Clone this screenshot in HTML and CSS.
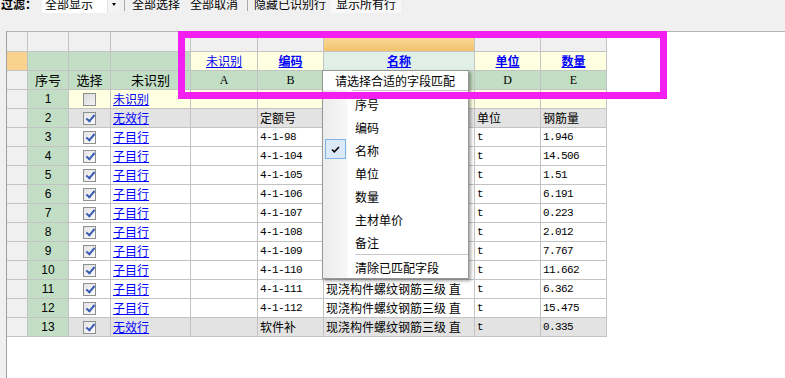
FILE: index.html
```html
<!DOCTYPE html>
<html>
<head>
  <meta charset="utf-8">
  <title>字段匹配</title>
  <link rel="stylesheet" href="styles.css">
</head>
<body>
  <div class="page">
    <div class="toolbar">
      <span class="label">过滤：</span>
      <div class="combo"><span>全部显示</span><span class="drop"><i class="arrow"></i></span></div>
      <span class="sep"></span>
      <a class="btn first">全部选择</a>
      <a class="btn">全部取消</a>
      <span class="sep sep2"></span>
      <a class="btn third">隐藏已识别行</a>
      <a class="btn hover">显示所有行</a>
    </div>

    <div class="sheet">
      <div class="grid">
        <!-- header: selected column -->
        <div class="c grey"></div><div class="c grey"></div><div class="c grey"></div><div class="c grey"></div>
        <div class="c grey"></div><div class="c grey"></div><div class="c sel"></div><div class="c grey"></div><div class="c grey"></div>
        <!-- header: field candidates -->
        <div class="c corner"></div><div class="c green"></div><div class="c green"></div><div class="c green"></div>
        <div class="c cand"><a>未识别</a></div>
        <div class="c cand"><a class="b">编码</a></div>
        <div class="c cand cur"><a class="b">名称</a></div>
        <div class="c cand"><a class="b">单位</a></div>
        <div class="c cand"><a class="b">数量</a></div>
        <!-- header: captions -->
        <div class="c grey"></div>
        <div class="c green ctr cap">序号</div>
        <div class="c green ctr cap">选择</div>
        <div class="c green ctr cap">未识别</div>
        <div class="c green ctr letter">A</div>
        <div class="c green ctr letter">B</div>
        <div class="c green ctr letter">C</div>
        <div class="c green ctr letter">D</div>
        <div class="c green ctr letter">E</div>

        <div class="tr r-new">
          <div class="c grey"></div><div class="c no">1</div>
          <div class="c chk"><span class="box"></span></div>
          <div class="c"><a>未识别</a></div>
          <div class="c"></div><div class="c"></div><div class="c"></div><div class="c"></div><div class="c"></div>
        </div>
        <div class="tr r-void">
          <div class="c grey"></div><div class="c no">2</div>
          <div class="c chk"><span class="box on"></span></div>
          <div class="c"><a>无效行</a></div>
          <div class="c"></div><div class="c">定额号</div><div class="c">名称</div><div class="c">单位</div><div class="c">钢筋量</div>
        </div>
        <div class="tr">
          <div class="c grey"></div><div class="c no">3</div>
          <div class="c chk"><span class="box on"></span></div>
          <div class="c"><a>子目行</a></div>
          <div class="c"></div><div class="c mono">4-1-98</div><div class="c">现浇构件螺纹钢筋三级 直.</div><div class="c mono">t</div><div class="c mono">1.946</div>
        </div>
        <div class="tr">
          <div class="c grey"></div><div class="c no">4</div>
          <div class="c chk"><span class="box on"></span></div>
          <div class="c"><a>子目行</a></div>
          <div class="c"></div><div class="c mono">4-1-104</div><div class="c">现浇构件螺纹钢筋三级 直</div><div class="c mono">t</div><div class="c mono">14.506</div>
        </div>
        <div class="tr">
          <div class="c grey"></div><div class="c no">5</div>
          <div class="c chk"><span class="box on"></span></div>
          <div class="c"><a>子目行</a></div>
          <div class="c"></div><div class="c mono">4-1-105</div><div class="c">现浇构件螺纹钢筋三级 直</div><div class="c mono">t</div><div class="c mono">1.51</div>
        </div>
        <div class="tr">
          <div class="c grey"></div><div class="c no">6</div>
          <div class="c chk"><span class="box on"></span></div>
          <div class="c"><a>子目行</a></div>
          <div class="c"></div><div class="c mono">4-1-106</div><div class="c">现浇构件螺纹钢筋三级 直</div><div class="c mono">t</div><div class="c mono">6.191</div>
        </div>
        <div class="tr">
          <div class="c grey"></div><div class="c no">7</div>
          <div class="c chk"><span class="box on"></span></div>
          <div class="c"><a>子目行</a></div>
          <div class="c"></div><div class="c mono">4-1-107</div><div class="c">现浇构件螺纹钢筋三级 直</div><div class="c mono">t</div><div class="c mono">0.223</div>
        </div>
        <div class="tr">
          <div class="c grey"></div><div class="c no">8</div>
          <div class="c chk"><span class="box on"></span></div>
          <div class="c"><a>子目行</a></div>
          <div class="c"></div><div class="c mono">4-1-108</div><div class="c">现浇构件螺纹钢筋三级 直</div><div class="c mono">t</div><div class="c mono">2.012</div>
        </div>
        <div class="tr">
          <div class="c grey"></div><div class="c no">9</div>
          <div class="c chk"><span class="box on"></span></div>
          <div class="c"><a>子目行</a></div>
          <div class="c"></div><div class="c mono">4-1-109</div><div class="c">现浇构件螺纹钢筋三级 直</div><div class="c mono">t</div><div class="c mono">7.767</div>
        </div>
        <div class="tr">
          <div class="c grey"></div><div class="c no">10</div>
          <div class="c chk"><span class="box on"></span></div>
          <div class="c"><a>子目行</a></div>
          <div class="c"></div><div class="c mono">4-1-110</div><div class="c">现浇构件螺纹钢筋三级 直</div><div class="c mono">t</div><div class="c mono">11.662</div>
        </div>
        <div class="tr">
          <div class="c grey"></div><div class="c no">11</div>
          <div class="c chk"><span class="box on"></span></div>
          <div class="c"><a>子目行</a></div>
          <div class="c"></div><div class="c mono">4-1-111</div><div class="c">现浇构件螺纹钢筋三级 直</div><div class="c mono">t</div><div class="c mono">6.362</div>
        </div>
        <div class="tr">
          <div class="c grey"></div><div class="c no">12</div>
          <div class="c chk"><span class="box on"></span></div>
          <div class="c"><a>子目行</a></div>
          <div class="c"></div><div class="c mono">4-1-112</div><div class="c">现浇构件螺纹钢筋三级 直</div><div class="c mono">t</div><div class="c mono">15.475</div>
        </div>
        <div class="tr r-void">
          <div class="c grey"></div><div class="c no">13</div>
          <div class="c chk"><span class="box on"></span></div>
          <div class="c"><a>无效行</a></div>
          <div class="c"></div><div class="c">软件补</div><div class="c">现浇构件螺纹钢筋三级 直</div><div class="c mono">t</div><div class="c mono">0.335</div>
        </div>
      </div>
    </div>

    <!-- field picker popup -->
    <div class="menu">
      <div class="menu-title">请选择合适的字段匹配</div>
      <div class="menu-body">
        <div class="menu-sep top"></div>
        <div class="item">序号</div>
        <div class="item">编码</div>
        <div class="item checked"><span class="tick"><svg width="9" height="7" viewBox="0 0 9 7"><path d="M1 3.5 L3.3 5.8 L8 1" fill="none" stroke="#000" stroke-width="1.6"/></svg></span>名称</div>
        <div class="item">单位</div>
        <div class="item">数量</div>
        <div class="item">主材单价</div>
        <div class="item">备注</div>
        <div class="menu-sep"></div>
        <div class="item last">清除已匹配字段</div>
      </div>
    </div>

    <div class="mark"></div>
  </div>
</body>
</html>
```

FILE: styles.css
```css
html,
body {
  margin: 0;
  padding: 0;
}

body {
  background: #f0f0f0;
  font-family: "Noto Sans CJK SC", "Liberation Sans", sans-serif;
  font-size: 12px;
  color: #000;
  overflow: hidden;
}

.page {
  position: relative;
  height: 100vh;
  display: flex;
  flex-direction: column;
}

/* toolbar */
.toolbar {
  flex: none;
  display: flex;
  align-items: center;
  height: 18px;
  margin-top: -5px;
  line-height: 18px;
}
.label {
  padding-left: 1px;
  font-weight: bold;
}
.combo {
  display: flex;
  justify-content: space-between;
  width: 77px;
  height: 18px;
  margin-left: 5px;
  padding-left: 3px;
  box-sizing: border-box;
  background: #fff;
}
.drop {
  display: flex;
  align-items: center;
  justify-content: center;
  width: 11px;
  background: #f4f4f4;
  border-left: 1px solid #e2e2e2;
}
.arrow {
  width: 0;
  height: 0;
  margin-top: 1px;
  border-top: 3px solid #000;
  border-left: 2.5px solid transparent;
  border-right: 2.5px solid transparent;
}
.sep {
  align-self: flex-start;
  width: 1px;
  height: 16px;
  margin-left: 5px;
  background: #a8a8a8;
}
.sep2 {
  margin-left: 4px;
}
.btn {
  padding: 0 5px;
  cursor: default;
}
.btn.first {
  margin-left: 2px;
}
.btn.third {
  margin-left: 1px;
}
.btn.hover {
  background: #f8f8f8;
}

/* sheet */
.sheet {
  flex: 1;
  margin: 18px 0 0 6px;
  background: #fff;
  border-top: 1px solid #b4b4b4;
  border-left: 1px solid #a0a0a0;
}
.grid {
  display: grid;
  width: max-content;
  grid-template-columns: 20px 40px 41px 79px 66px 65px 150px 65px 65px;
  grid-template-rows: 19px 18px 18px;
  grid-auto-rows: 18px;
  gap: 1px;
  background: #c3c3c3;
  border-right: 1px solid #c3c3c3;
  border-bottom: 1px solid #c3c3c3;
}
.tr {
  display: contents;
}
.c {
  padding: 0 2px;
  background: #fff;
  line-height: 18px;
  white-space: nowrap;
  overflow: hidden;
}
.r-new .c {
  background: #ffffe1;
}
.r-void .c {
  background: #e3e3e3;
}
.grid .grey {
  background: #f0f0f0;
}
.grid .green,
.grid .no {
  background: #c2dec4;
}
.grid .sel {
  background: linear-gradient(#fae0a9, #f3c36c);
}
.grid .corner {
  background: #f9d38d;
}
.grid .cand {
  background: #ffffe1;
  text-align: center;
}
.grid .cand.cur {
  background: #e1f0e6;
}
.ctr {
  text-align: center;
}
.cap {
  font-size: 13px;
}
.letter {
  font-family: "Liberation Serif", serif;
  font-size: 12px;
}
.no {
  text-align: center;
  font-family: "Liberation Sans", sans-serif;
  font-size: 12px;
}
.mono {
  font-family: "Liberation Mono", monospace;
  font-size: 11px;
  letter-spacing: -0.6px;
}
.c a {
  color: #0000ff;
  text-decoration: underline;
}
.c a.b {
  font-weight: bold;
}

/* checkbox */
.chk {
  display: flex;
  align-items: center;
  justify-content: center;
}
.box {
  position: relative;
  width: 13px;
  height: 13px;
  box-sizing: border-box;
  border: 1px solid #8e8f8f;
  background: linear-gradient(135deg, #d8d8d8, #f6f6f6);
}
.box.on {
  background: linear-gradient(135deg, #e4e4e4, #fbfbfb);
}
.box.on::after {
  content: "";
  position: absolute;
  left: 3.5px;
  top: 0.5px;
  width: 3px;
  height: 7px;
  border-right: 2px solid #3a5cb4;
  border-bottom: 2px solid #3a5cb4;
  transform: rotate(40deg);
}

/* popup */
.menu {
  position: absolute;
  left: 322px;
  top: 70px;
  z-index: 2;
  width: 145px;
  background: #fff;
  border: 1px solid #979797;
  box-shadow: 2px 2px 3px rgba(0, 0, 0, .35);
}
.menu-title {
  height: 19px;
  padding-left: 12px;
  line-height: 19px;
}
.menu-body {
  background: linear-gradient(90deg, #ececec 0, #f7f7f7 24px, #fff 25px);
}
.menu-sep {
  height: 0;
  margin-left: 32px;
  border-top: 1px solid #c8c8c8;
}
.menu-sep.top {
  margin: 0 0 2px 29px;
}
.item {
  position: relative;
  height: 23px;
  padding-left: 32px;
  line-height: 23px;
}
.item.last {
  height: 22px;
  margin-top: 1px;
}
.tick {
  position: absolute;
  left: 2px;
  top: 0;
  display: flex;
  align-items: center;
  justify-content: center;
  width: 21px;
  height: 20px;
  box-sizing: border-box;
  background: #dce9f8;
  border: 1px solid #7db2e8;
}

/* highlight frame */
.mark {
  position: absolute;
  left: 178px;
  top: 31px;
  z-index: 3;
  width: 489px;
  height: 68px;
  box-sizing: border-box;
  border: 7px solid #f21ff0;
}
```
